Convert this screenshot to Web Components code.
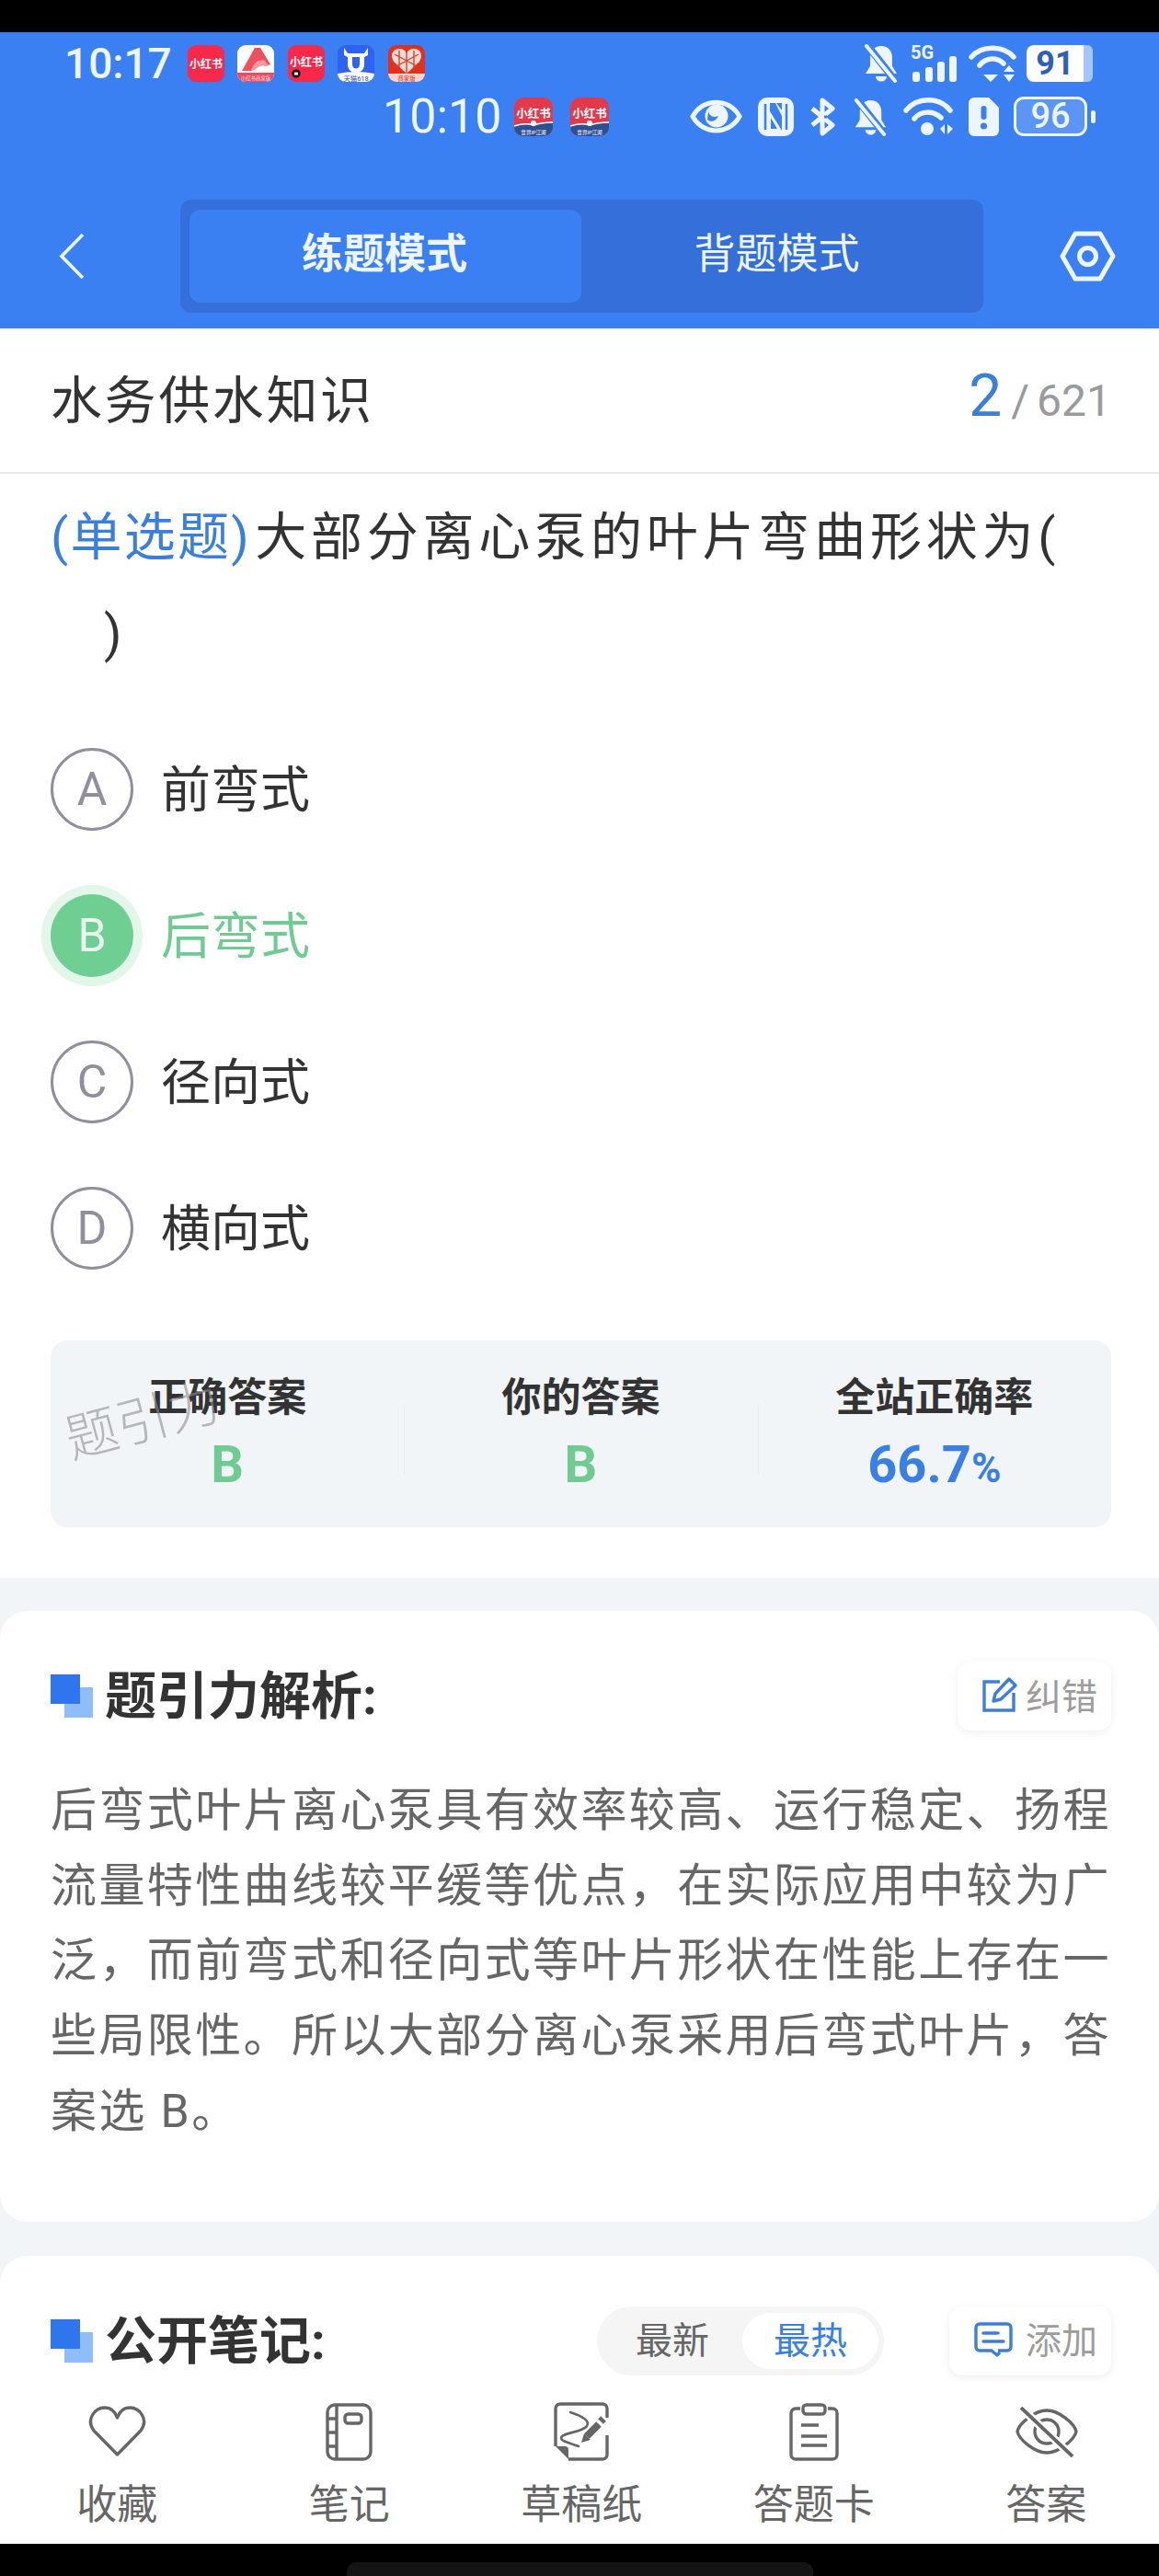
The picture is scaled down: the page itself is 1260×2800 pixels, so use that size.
<!DOCTYPE html>
<html lang="zh-CN">
<head>
<meta charset="utf-8">
<style>
	html, body { margin: 0; padding: 0; background: #000; }
	body { font-family: Roboto, "Noto Sans CJK SC", sans-serif; color: #333; }
</style>
</head>
<body>
<phone-screen>
	<status-area></status-area>
	<subject-bar name="水务供水知识" current="2" total="621"></subject-bar>
	<quiz-question tag="(单选题)">大部分离心泵的叶片弯曲形状为(<br><span style="display:inline-block;width:58px"></span>)</quiz-question>
	<option-row letter="A">前弯式</option-row>
	<option-row letter="B" state="right">后弯式</option-row>
	<option-row letter="C">径向式</option-row>
	<option-row letter="D">横向式</option-row>
	<answer-stats></answer-stats>

	<info-card heading="题引力解析:" style="margin-top:36px">
		<chip-button slot="tools" kind="edit">纠错</chip-button>
		<p style="margin:47px 0 23px;font-size:50px;line-height:81.7px;letter-spacing:2.4px;color:#666">后弯式叶片离心泵具有效率较高、运行稳定、扬程流量特性曲线较平缓等优点，在实际应用中较为广泛，而前弯式和径向式等叶片形状在性能上存在一些局限性。所以大部分离心泵采用后弯式叶片，答案选 B。</p>
	</info-card>

	<info-card heading="公开笔记:" style="margin-top:37px">
		<sort-toggle slot="tools"></sort-toggle>
		<chip-button slot="tools" kind="note">添加</chip-button>
	</info-card>
</phone-screen>

<script>
// all the inline svg used by more than one element
const WHITE = "#edf5ff";

const ICONS = {
	bell: (w, h) => `<svg width="${w}" height="${h}" viewBox="0 0 38 43">
		<path d="M19 3C27 3 31 9 31 16V25L36 33H2L7 25V16C7 9 11 3 19 3Z" fill="${WHITE}"/>
		<path d="M13 36H25A6 5.5 0 0 1 13 36Z" fill="${WHITE}"/>
		<path d="M3 1L36 43" stroke="#3b80f3" stroke-width="8"/>
		<path d="M3 3L34 41" stroke="${WHITE}" stroke-width="4" stroke-linecap="round"/>
	</svg>`,
	signal: `<svg width="50" height="43" viewBox="0 0 50 43">
		<text x="0" y="17" font-size="20" font-weight="700" fill="${WHITE}" font-family="Roboto, sans-serif">5G</text>
		<rect x="2" y="31" width="8" height="11" rx="3" fill="${WHITE}"/>
		<rect x="16" y="26" width="8" height="16" rx="3" fill="${WHITE}"/>
		<rect x="29" y="20" width="8" height="22" rx="3" fill="${WHITE}"/>
		<rect x="42" y="14" width="8" height="28" rx="3" fill="${WHITE}"/>
	</svg>`,
	wifiUpDown: `<svg width="52" height="42" viewBox="0 0 52 42" fill="none">
		<path d="M3 14C14 1 38 1 49 14" stroke="${WHITE}" stroke-width="5.5" stroke-linecap="round"/>
		<path d="M12 23C19 14 31 14 38 21" stroke="${WHITE}" stroke-width="5.5" stroke-linecap="round"/>
		<path d="M16 33H32L24 41Z" fill="${WHITE}"/>
		<path d="M38 30L44 23L50 30ZM38 33H50L44 41Z" fill="${WHITE}"/>
	</svg>`,
	wifiSides: `<svg width="54" height="43" viewBox="0 0 54 43" fill="none">
		<path d="M3 15C15 0 39 0 51 15" stroke="${WHITE}" stroke-width="5.5" stroke-linecap="round"/>
		<path d="M12 24C19 15 33 15 41 23" stroke="${WHITE}" stroke-width="5.5" stroke-linecap="round"/>
		<circle cx="26" cy="35" r="7" fill="${WHITE}"/>
		<path d="M40 35L45 30V41ZM54 35L48 30V41Z" fill="${WHITE}"/>
	</svg>`,
	eye: `<svg width="57" height="39" viewBox="0 0 57 39" fill="none">
		<path d="M3 19.5C14 -1 43 -1 54 19.5C43 40 14 40 3 19.5Z" stroke="${WHITE}" stroke-width="5"/>
		<circle cx="29" cy="19" r="12.5" fill="${WHITE}"/>
		<path d="M20 14C22 20 26 21 31 19C29 24 23 27 19 23Z" fill="#3b80f3"/>
	</svg>`,
	nfc: `<svg width="39" height="42" viewBox="0 0 39 42" fill="none">
		<rect width="39" height="42" rx="10" fill="${WHITE}"/>
		<path d="M8 7V35M31 7V35" stroke="#3b80f3" stroke-width="2.5"/>
		<path d="M13 6H19L26 20V36L13 15ZM14 22L21 34H14Z" fill="#3b80f3"/>
		<path d="M20 6H26V14Z" fill="#3b80f3"/>
	</svg>`,
	bluetooth: `<svg width="31" height="42" viewBox="0 0 31 42" fill="none">
		<path d="M4 12L26 30L15 39V3L26 12L4 30" stroke="${WHITE}" stroke-width="5" stroke-linejoin="round"/>
		<path d="M17 21L20 21" stroke="#3b80f3" stroke-width="3"/>
	</svg>`,
	sim: `<svg width="33" height="42" viewBox="0 0 33 42">
		<path d="M6 0H22L33 11V36A6 6 0 0 1 27 42H6A6 6 0 0 1 0 36V6A6 6 0 0 1 6 0Z" fill="${WHITE}"/>
		<rect x="13.5" y="9" width="6" height="15" rx="3" fill="#3b80f3"/>
		<circle cx="16.5" cy="31" r="3.6" fill="#3b80f3"/>
	</svg>`,
	back: `<svg width="28" height="51" viewBox="0 0 28 51" fill="none">
		<path d="M26 2L3 25.5L26 49" stroke="${WHITE}" stroke-width="3.6"/>
	</svg>`,
	hex: `<svg width="61" height="55" viewBox="0 0 61 55" fill="none">
		<path d="M17 3H44L58 27.5L44 52H17L3 27.5Z" stroke="${WHITE}" stroke-width="5" stroke-linejoin="round"/>
		<circle cx="30.5" cy="27.5" r="9" stroke="${WHITE}" stroke-width="5"/>
	</svg>`,
	edit: `<svg width="38" height="38" viewBox="0 0 38 38" fill="none">
		<path d="M19 5H2V36H34V17" stroke="#3d7fd6" stroke-width="3.4"/>
		<path d="M29 2L36 9L20 24L12 26L14 18Z" stroke="#3d7fd6" stroke-width="3.4" stroke-linejoin="round"/>
	</svg>`,
	note: `<svg width="42" height="38" viewBox="0 0 42 38" fill="none">
		<path d="M26 31H36A4 4 0 0 0 40 27V6A4 4 0 0 0 36 2H6A4 4 0 0 0 2 6V27A4 4 0 0 0 6 31H19L25 36L28 33" stroke="#3d7fd6" stroke-width="3.4" stroke-linejoin="round"/>
		<path d="M10 12H26M10 21H32" stroke="#3d7fd6" stroke-width="3.4" stroke-linecap="round"/>
	</svg>`,
	heart: `<svg width="63" height="56" viewBox="0 0 63 56" fill="none">
		<path d="M31.5 53L6 27C-3 15 7 2 18 2C24 2 29 6 31.5 13C34 6 39 2 45 2C56 2 66 15 57 27Z" stroke="#666" stroke-width="3.4" stroke-linejoin="round"/>
	</svg>`,
	notebook: `<svg width="51" height="63" viewBox="0 0 51 63" fill="none" stroke="#666" stroke-width="3.4">
		<rect x="2" y="2" width="47" height="59" rx="8"/>
		<path d="M12 2V61M2 17H12M2 32H12M2 47H12"/>
		<rect x="21" y="12" width="18" height="10" rx="3.5"/>
	</svg>`,
	draft: `<svg width="60" height="64" viewBox="0 0 60 64" fill="none" stroke="#666" stroke-width="3.4">
		<path d="M16 62H53A5 5 0 0 0 58 57V36M58 17V7A5 5 0 0 0 53 2H7A5 5 0 0 0 2 7V48"/>
		<path d="M2 48H12A4 4 0 0 1 16 52V62Z" fill="#666" stroke="none"/>
		<path d="M18 11C30 15 40 20 36 26C32 33 8 33 8 39C8 43 20 45 27 48" stroke-width="2.6" stroke-linecap="round"/>
		<path d="M36 37L49 24" stroke-width="8"/>
		<path d="M30 44L33 34L40 41Z" fill="#666" stroke="none"/>
		<path d="M51 21L54 18" stroke-width="8"/>
	</svg>`,
	clipboard: `<svg width="54" height="63" viewBox="0 0 54 63" fill="none" stroke="#666" stroke-width="3.4">
		<path d="M12 6H7A5 5 0 0 0 2 11V56A5 5 0 0 0 7 61H47A5 5 0 0 0 52 56V11A5 5 0 0 0 47 6H42"/>
		<rect x="15" y="2" width="24" height="10" rx="3.5"/>
		<path d="M13 24H32M13 36H41M13 46H41"/>
	</svg>`,
	eyeOff: `<svg width="69" height="55" viewBox="0 0 69 55" fill="none" stroke="#666" stroke-width="3.4">
		<path d="M3 27C5 18 22 4 35 4C48 4 65 18 67 27C65 36 48 50 35 50C22 50 5 36 3 27Z" stroke-linejoin="round"/>
		<circle cx="35" cy="27" r="13"/>
		<path d="M7 1L63 54" stroke="#fff" stroke-width="9"/>
		<path d="M7 1L63 54" stroke-width="3.8"/>
	</svg>`,
};

// the little app badges in the notification row
const BADGES = {
	red: `<svg width="40" height="40" viewBox="0 0 40 40">
		<rect width="40" height="40" rx="9" fill="#f8284b"/>
		<text x="20" y="25" text-anchor="middle" font-size="12" font-weight="700" fill="#fff">小红书</text>
	</svg>`,
	seller: `<svg width="40" height="40" viewBox="0 0 40 40">
		<rect width="40" height="40" rx="9" fill="#fff"/>
		<path d="M5 28L19 3H25L36 21L30 23L24 17C20 18 17 24 15 28Z" fill="#f0505e"/>
		<path d="M15 28C17 20 24 14 30 17L34 23C30 22 26 22 23 24C20 26 18 28 15 28Z" fill="#f79aa3"/>
		<path d="M0 30H40V31A9 9 0 0 1 31 40H9A9 9 0 0 1 0 31Z" fill="#f3495c"/>
		<text x="20" y="38" text-anchor="middle" font-size="5.4" fill="#ffe3e6">小红书商家版</text>
	</svg>`,
	redDot: `<svg width="40" height="40" viewBox="0 0 40 40">
		<rect width="40" height="40" rx="9" fill="#f8284b"/>
		<text x="20" y="23" text-anchor="middle" font-size="12" font-weight="700" fill="#fff">小红书</text>
		<circle cx="9" cy="31" r="4.6" fill="#111"/>
		<rect x="7" y="29.6" width="4" height="3" fill="#fff"/>
	</svg>`,
	tmall: `<svg width="40" height="40" viewBox="0 0 40 40">
		<rect width="40" height="40" rx="9" fill="#2f62f0"/>
		<path d="M7 3L11 9H29L33 3L33 11L29 13V21C29 33 11 33 11 21V13L7 11Z" fill="#fff"/>
		<path d="M16 13H24V21C24 27 16 27 16 21Z" fill="#2f62f0"/>
		<path d="M0 31Q20 27 40 31A9 9 0 0 1 31 40H9A9 9 0 0 1 0 31Z" fill="#fff"/>
		<text x="20" y="38.5" text-anchor="middle" font-size="7.4" fill="#1f49b8">天猫618</text>
	</svg>`,
	pdd: `<svg width="40" height="40" viewBox="0 0 40 40">
		<rect width="40" height="40" rx="9" fill="#e0301e"/>
		<path d="M20 31L6 18C1 10 6 4 12 4C16 4 19 6 20 9C21 6 24 4 28 4C34 4 39 10 34 18Z" fill="#fbdcd4"/>
		<path d="M7 10L33 24M33 10L7 24M20 7V31M12 6V24M28 6V24" stroke="#d8412e" stroke-width="1.4"/>
		<path d="M0 31H40A9 9 0 0 1 31 40H9A9 9 0 0 1 0 31Z" fill="#fdd5cd"/>
		<text x="20" y="38.6" text-anchor="middle" font-size="6.4" fill="#d0301f">商家版</text>
	</svg>`,
	event: `<svg width="42" height="42" viewBox="0 0 42 42">
		<rect width="42" height="42" rx="10" fill="#e23a4b"/>
		<text x="21" y="22" text-anchor="middle" font-size="12.5" font-weight="700" fill="#fff">小红书</text>
		<path d="M0 31Q12 27 21 30Q30 27 42 27V32A10 10 0 0 1 32 42H10A10 10 0 0 1 0 32Z" fill="#2f4f90"/>
		<path d="M0 31Q12 27 21 30Q30 27 42 27" stroke="#fff" stroke-width="1.4" fill="none"/>
		<circle cx="21" cy="28" r="3" fill="#fff"/>
		<text x="21" y="39.5" text-anchor="middle" font-size="5.6" fill="#fff">世界IP江湖</text>
	</svg>`,
};

class PhoneScreen extends HTMLElement {
	connectedCallback() {
		this.attachShadow({ mode: "open" });
		this.shadow = this.shadowRoot;
		this.shadow.innerHTML = `
			<style>
				:host { display: flex; flex-direction: column; width: 1260px; height: 2800px; background: #000; overflow: hidden; }
				.notch { height: 35px; flex: none; }
				.scroll { flex: 1; min-height: 0; overflow: hidden; background: #f2f5f8; }
				.home { height: 35px; flex: none; display: flex; justify-content: center; align-items: flex-end; }
				.home i { width: 507px; height: 15px; border-radius: 10px 10px 0 0; background: #141414; }
			</style>
			<div class="notch"></div>
			<slot name="top"></slot>
			<div class="scroll"><slot></slot></div>
			<bottom-nav></bottom-nav>
			<div class="home"><i></i></div>
		`;
	}
}

class StatusArea extends HTMLElement {
	connectedCallback() {
		this.attachShadow({ mode: "open" }).innerHTML = `
			<style>
				:host { display: block; background: #3b80f3; color: ${WHITE}; padding: 12px 0 17px; }
				.row { display: flex; align-items: center; }
				.one { height: 43px; padding: 0 70px 0 70px; }
				.two { height: 45px; margin-top: 14px; padding: 0 69px 0 416px; }
				.time { font-size: 46px; font-weight: 500; line-height: 1; }
				.two .time { font-size: 52px; font-weight: 400; }
				.apps { display: flex; gap: 14.5px; margin-left: 17px; }
				.two .apps { gap: 19px; margin-left: 13px; }
				.apps svg { display: block; }
				.stat { display: flex; align-items: center; margin-left: auto; }
				.one .stat { gap: 13px; }
				.two .stat { gap: 16.5px; }
				.stat svg { display: block; }
				.batt-a { display: flex; width: 74px; height: 40px; margin-left: -2px; }
				.batt-a b { width: 62px; background: #fff; border-radius: 8px 0 0 8px; color: #2f5fb8; font-size: 36px; line-height: 40px; text-align: center; font-weight: 700; }
				.batt-a i { width: 10px; background: #a5c5fa; border-radius: 0 6px 6px 0; margin: 0; }
				.batt-b { display: flex; align-items: center; gap: 4px; }
				.batt-b b { box-sizing: border-box; width: 80px; height: 43px; border: 3px solid ${WHITE}; border-radius: 11px; background: rgba(255,255,255,.17); font-size: 38px; line-height: 37px; font-weight: 500; text-align: center; }
				.batt-b i { width: 5px; height: 14px; background: ${WHITE}; border-radius: 3px; }
				header { display: flex; align-items: center; margin-top: 68px; padding-left: 64px; }
				.gear { margin-left: 83px; }
				header svg { display: block; }
				seg-tabs { margin-left: 104px; }
			</style>
			<div class="row one">
				<span class="time">10:17</span>
				<div class="apps">${BADGES.red}${BADGES.seller}${BADGES.redDot}${BADGES.tmall}${BADGES.pdd}</div>
				<div class="stat">
					${ICONS.bell(38, 43)}${ICONS.signal}${ICONS.wifiUpDown}
					<div class="batt-a"><b>91</b><i></i></div>
				</div>
			</div>
			<div class="row two">
				<span class="time">10:10</span>
				<div class="apps">${BADGES.event}${BADGES.event}</div>
				<div class="stat">
					${ICONS.eye}${ICONS.nfc}${ICONS.bluetooth}${ICONS.bell(39, 42)}${ICONS.wifiSides}${ICONS.sim}
					<div class="batt-b"><b>96</b><i></i></div>
				</div>
			</div>
			<header>
				${ICONS.back}
				<seg-tabs></seg-tabs>
				<span class="gear">${ICONS.hex}</span>
			</header>
		`;
		this.slot = "top";
	}
}

class SegTabs extends HTMLElement {
	connectedCallback() {
		this.attachShadow({ mode: "open" }).innerHTML = `
			<style>
				:host { display: grid; grid-template-columns: 426px 1fr; box-sizing: border-box; width: 873px; height: 123px; padding: 11px 10px; background: #3570da; border-radius: 12px; font-size: 45px; color: ${WHITE}; font-family: "Noto Sans CJK SC", sans-serif; }
				div { display: flex; align-items: center; justify-content: center; padding: 0 2px 12px 0; }
				.on { background: #3b80f3; border-radius: 12px; font-weight: 700; }
			</style>
			<div class="on">练题模式</div>
			<div>背题模式</div>
		`;
	}
}

class SubjectBar extends HTMLElement {
	connectedCallback() {
		let name = this.getAttribute("name");
		let current = this.getAttribute("current");
		let total = this.getAttribute("total");
		this.attachShadow({ mode: "open" }).innerHTML = `
			<style>
				:host { display: flex; align-items: center; box-sizing: border-box; height: 158px; padding: 0 52px 10px 55px; background: #fff; border-bottom: 2px solid #e8e8e8; }
				.name { font-size: 56px; letter-spacing: 2.6px; color: #333; }
				.num { margin-left: auto; color: #9a9a9a; font-size: 48px; display: flex; align-items: baseline; }
				.num b { font-weight: 400; font-size: 64px; color: #3a7fdc; margin-right: 10px; }
				.num span { margin-right: 8px; }
			</style>
			<span class="name">${name}</span>
			<div class="num"><b>${current}</b><span>/</span>${total}</div>
		`;
	}
}

class QuizQuestion extends HTMLElement {
	connectedCallback() {
		let tag = this.getAttribute("tag");
		this.attachShadow({ mode: "open" }).innerHTML = `
			<style>
				:host { display: block; background: #fff; padding: 17px 55px 36px; font-size: 56px; line-height: 105px; letter-spacing: 4.8px; color: #333; }
				b { font-weight: 400; color: #3a7fdc; letter-spacing: 2.3px; margin-right: 4px; }
			</style>
			<b>${tag}</b><slot></slot>
		`;
	}
}

class OptionRow extends HTMLElement {
	connectedCallback() {
		let letter = this.getAttribute("letter");
		let right = this.getAttribute("state") === "right";
		this.attachShadow({ mode: "open" }).innerHTML = `
			<style>
				:host { display: flex; align-items: center; height: 159px; padding-left: 55px; background: #fff; font-size: 54px; color: ${right ? "#6fcb92" : "#333"}; }
				.dot { box-sizing: border-box; display: flex; align-items: center; justify-content: center; width: 90px; height: 90px; border-radius: 50%; font-size: 50px; margin-right: 30px;
					${right
						? "background:#6fcf93;color:#eafaf0;box-shadow:0 0 0 10px #e3f6ea;"
						: "border:3px solid #8f8f9d;color:#8f8f9d;"}
				}
				.txt { margin-bottom: 7px; }
			</style>
			<span class="dot">${letter}</span><span class="txt"><slot></slot></span>
		`;
	}
}

class AnswerStats extends HTMLElement {
	connectedCallback() {
		this.attachShadow({ mode: "open" }).innerHTML = `
			<style>
				:host { display: block; background: #fff; padding: 43px 52px 55px 55px; }
				.box { position: relative; display: grid; grid-template-columns: repeat(3, 1fr); height: 203px; box-sizing: border-box; padding-top: 40px; background: #f1f5f8; border-radius: 18px; }
				.col { position: relative; text-align: center; }
				.col + .col::before { content: ""; position: absolute; left: 0; top: 30px; height: 76px; width: 1px; background: #e8ecef; }
				.lab { font-size: 43px; line-height: 44px; font-weight: 700; color: #333; }
				.val { margin-top: 21px; font-size: 56px; line-height: 60px; font-weight: 700; color: #6fcb92; }
				.val.rate { color: #3a7fe6; }
				.val small { font-size: 44px; }
				.mark { position: absolute; left: 15px; top: 58px; font-size: 57px; line-height: 60px; font-weight: 300; color: rgba(140,140,140,.6); transform: rotate(-15deg); }
			</style>
			<div class="box">
				<div class="col"><div class="lab">正确答案</div><div class="val">B</div></div>
				<div class="col"><div class="lab">你的答案</div><div class="val">B</div></div>
				<div class="col"><div class="lab">全站正确率</div><div class="val rate">66.7<small>%</small></div></div>
				<span class="mark">题引力</span>
			</div>
		`;
	}
}

class InfoCard extends HTMLElement {
	connectedCallback() {
		let heading = this.getAttribute("heading");
		this.attachShadow({ mode: "open" }).innerHTML = `
			<style>
				:host { display: block; background: #fff; border-radius: 30px; padding: 55px 52px 55px 55px; }
				.head { display: flex; align-items: center; height: 75px; }
				.mark { display: grid; grid-template: 14px 18px 15px / 15px 17px 14px; width: 46px; height: 47px; margin-right: 13px; }
				.mark i { grid-area: 2 / 2 / 4 / 4; background: #8fbdf8; }
				.mark u { grid-area: 1 / 1 / 3 / 3; background: #2f76ee; }
				h2 { margin: 0; padding-bottom: 10px; font-size: 56px; font-weight: 700; color: #333; }
				.tools { margin-left: auto; display: flex; gap: 71px; align-items: center; }
			</style>
			<div class="head">
				<span class="mark"><i></i><u></u></span>
				<h2>${heading}</h2>
				<div class="tools"><slot name="tools"></slot></div>
			</div>
			<slot></slot>
		`;
	}
}

class ChipButton extends HTMLElement {
	connectedCallback() {
		let kind = this.getAttribute("kind");
		this.attachShadow({ mode: "open" }).innerHTML = `
			<style>
				:host { display: flex; align-items: center; box-sizing: border-box; gap: ${kind === "edit" ? 9 : 14}px; height: 75px; padding: 0 15px 3px 27px; background: #fff; border-radius: 14px; box-shadow: 0 2px 10px rgba(0,0,0,.07); font-size: 39px; color: #9c9c9c; }
				svg { display: block; }
				span { margin-bottom: 3px; }
			</style>
			${ICONS[kind]}<span><slot></slot></span>
		`;
	}
}

class SortToggle extends HTMLElement {
	connectedCallback() {
		this.attachShadow({ mode: "open" }).innerHTML = `
			<style>
				:host { display: flex; align-items: center; box-sizing: border-box; width: 312px; height: 75px; padding: 7px 6px; background: #f5f5f5; border-radius: 38px; font-size: 40px; color: #666; }
				span { display: flex; align-items: center; justify-content: center; box-sizing: border-box; height: 61px; padding-bottom: 7px; }
				.a { width: 152px; }
				.b { width: 148px; background: #fff; border-radius: 31px; color: #3a7fdc; }
			</style>
			<span class="a">最新</span><span class="b">最热</span>
		`;
	}
}

class BottomNav extends HTMLElement {
	connectedCallback() {
		let items = [
			["收藏", ICONS.heart],
			["笔记", ICONS.notebook],
			["草稿纸", ICONS.draft],
			["答题卡", ICONS.clipboard],
			["答案", ICONS.eyeOff],
		];
		this.attachShadow({ mode: "open" }).innerHTML = `
			<style>
				:host { display: grid; grid-template-columns: repeat(5, 252.5px); flex: none; box-sizing: border-box; height: 175px; padding: 20px 0 0 1px; background: #fff; overflow: hidden; }
				.item { display: flex; flex-direction: column; align-items: center; }
				.ico { display: flex; align-items: center; justify-content: center; height: 66px; }
				.ico svg { display: block; }
				.lab { margin-top: 25px; font-size: 44px; line-height: 44px; color: #666; }
			</style>
			${items.map(([label, icon]) => `
				<div class="item"><div class="ico">${icon}</div><div class="lab">${label}</div></div>
			`).join("")}
		`;
	}
}

customElements.define("seg-tabs", SegTabs);
customElements.define("status-area", StatusArea);
customElements.define("subject-bar", SubjectBar);
customElements.define("quiz-question", QuizQuestion);
customElements.define("option-row", OptionRow);
customElements.define("answer-stats", AnswerStats);
customElements.define("info-card", InfoCard);
customElements.define("chip-button", ChipButton);
customElements.define("sort-toggle", SortToggle);
customElements.define("bottom-nav", BottomNav);
customElements.define("phone-screen", PhoneScreen);
</script>
</body>
</html>
